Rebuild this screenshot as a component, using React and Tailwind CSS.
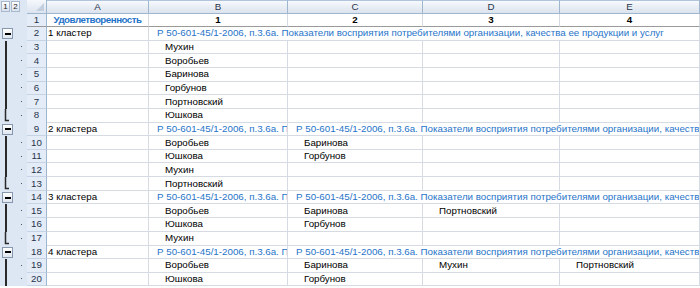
const LONG =
  "Р 50-601-45/1-2006, п.3.6а. Показатели восприятия потребителями организации, качества ее продукции и услуг";

const GRID = "grid grid-cols-[27px_20px_102px_139px_135px_137px_140px]";

const L = { t: LONG, blue: true };
const rows = [
  { n: 2, a: "1 кластер", cells: [{ ...L, span: 4 }], out: "btn" },
  { n: 3, cells: [{ t: "Мухин" }], out: "line" },
  { n: 4, cells: [{ t: "Воробьев" }], out: "line" },
  { n: 5, cells: [{ t: "Баринова" }], out: "line" },
  { n: 6, cells: [{ t: "Горбунов" }], out: "line" },
  { n: 7, cells: [{ t: "Портновский" }], out: "line" },
  { n: 8, cells: [{ t: "Юшкова" }], out: "end" },
  { n: 9, a: "2 кластера", cells: [L, { ...L, span: 3 }], out: "btn" },
  { n: 10, cells: [{ t: "Воробьев" }, { t: "Баринова" }], out: "line" },
  { n: 11, cells: [{ t: "Юшкова" }, { t: "Горбунов" }], out: "line" },
  { n: 12, cells: [{ t: "Мухин" }], out: "line" },
  { n: 13, cells: [{ t: "Портновский" }], out: "end" },
  { n: 14, a: "3 кластера", cells: [L, { ...L, span: 3 }], out: "btn" },
  { n: 15, cells: [{ t: "Воробьев" }, { t: "Баринова" }, { t: "Портновский" }], out: "line" },
  { n: 16, cells: [{ t: "Юшкова" }, { t: "Горбунов" }], out: "line" },
  { n: 17, cells: [{ t: "Мухин" }], out: "end" },
  { n: 18, a: "4 кластера", cells: [L, { ...L, span: 3 }], out: "btn" },
  { n: 19, cells: [{ t: "Воробьев" }, { t: "Баринова" }, { t: "Мухин" }, { t: "Портновский" }], out: "line" },
  { n: 20, cells: [{ t: "Юшкова" }, { t: "Горбунов" }], out: "line" },
];

const SPAN = { 1: "col-span-1", 2: "col-span-2", 3: "col-span-3", 4: "col-span-4" };

const Outline = ({ type }) => (
  <div className="flex h-full bg-[#dde7f4]">
    <div className="w-[14px] h-full flex items-center">
      {type === "btn" && (
        <div className="ml-[2px] w-[11px] h-[11px] border border-[#8797ad] bg-gradient-to-b from-white to-[#dfe6ef] flex items-center justify-center">
          <div className="w-[6px] h-[2px] bg-black" />
        </div>
      )}
      {type === "line" && <div className="ml-[5px] w-[1.5px] h-full bg-[#2a2a2a]" />}
      {type === "end" && (
        <svg width="14" height="14" viewBox="0 0 14 14" className="self-start">
          <path d="M5.5 0 V11.5 H9" fill="none" stroke="#2a2a2a" strokeWidth="1.5" />
        </svg>
      )}
    </div>
    <div className="w-[13px] h-full flex items-center justify-center">
      {type !== "btn" && <div className="w-px h-px bg-[#555] -mt-px ml-[2px]" />}
    </div>
  </div>
);

const RowHead = ({ n, thick }) => (
  <div
    className={`h-full bg-[#e4ecf7] border-r border-[#9eb6ce] flex items-center justify-center text-[#27344a] ${
      thick ? "border-b border-b-[#9a9a9a]" : "border-b border-b-[#c6d3e4]"
    }`}
  >
    {n}
  </div>
);

const Row = ({ r }) => {
  const cells = [...r.cells];
  let used = cells.reduce((s, c) => s + (c.span || 1), 0);
  while (used < 4) {
    cells.push({ t: "" });
    used++;
  }
  return (
    <div className={`${GRID} h-[13.65px]`}>
      <Outline type={r.out} />
      <RowHead n={r.n} />
      <div className="border-r border-b border-[#d6dbe3] pl-px flex items-center whitespace-nowrap overflow-hidden">
        {r.a}
      </div>
      {cells.map((c, i) => (
        <div
          key={i}
          className={`${SPAN[c.span || 1]} border-r border-b border-[#d6dbe3] flex items-center whitespace-nowrap overflow-hidden ${
            c.blue ? "pl-[8px] text-[#1f74c9]" : "pl-[16px]"
          }`}
        >
          {c.t}
        </div>
      ))}
    </div>
  );
};

export default function App() {
  return (
    <div className="w-[700px] h-[288px] overflow-hidden bg-white text-[9.75px] leading-none text-black font-['Liberation_Sans',Arial,sans-serif]">
      <div className={`${GRID} h-[14px]`}>
        <div className="bg-[#dde7f4] flex items-start gap-px pt-px pl-px">
          <div className="w-[9px] h-[11px] border border-[#a9b8cb] bg-gradient-to-b from-white to-[#d9e2ee] flex items-center justify-center text-[8px] text-[#222]">
            1
          </div>
          <div className="w-[9px] h-[11px] border border-[#a9b8cb] bg-gradient-to-b from-white to-[#d9e2ee] flex items-center justify-center text-[8px] text-[#222]">
            2
          </div>
        </div>
        <div className="bg-gradient-to-b from-[#f5f8fc] to-[#dce4ef] border-r border-b border-[#9eb6ce] flex items-end justify-end p-[2px]">
          <svg width="8" height="8" viewBox="0 0 8 8">
            <path d="M8 0 V8 H0 Z" fill="#c3cfdf" />
          </svg>
        </div>
        {["A", "B", "C", "D", "E"].map((l) => (
          <div
            key={l}
            className="bg-gradient-to-b from-[#f7f9fc] to-[#dbe3ee] border-r border-b border-[#9eb6ce] border-t border-t-[#b0c4dc] flex items-center justify-center text-[#27344a]"
          >
            {l}
          </div>
        ))}
      </div>
      <div className={`${GRID} h-[13px]`}>
        <div className="bg-[#dde7f4]" />
        <RowHead n={1} thick />
        <div className="border-r border-[#d6dbe3] border-b border-b-[#9a9a9a] flex items-center justify-center font-bold tracking-[-0.5px] text-[#1f74c9]">
          Удовлетворенность
        </div>
        {["1", "2", "3", "4"].map((v) => (
          <div
            key={v}
            className="border-r border-[#d6dbe3] border-b border-b-[#9a9a9a] flex items-center justify-center font-bold"
          >
            {v}
          </div>
        ))}
      </div>
      {rows.map((r) => (
        <Row key={r.n} r={r} />
      ))}
    </div>
  );
}
